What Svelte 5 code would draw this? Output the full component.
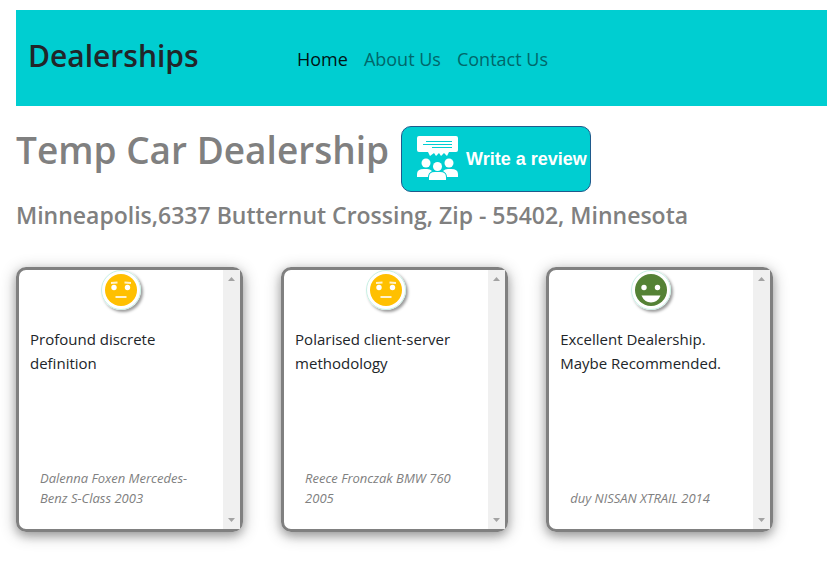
<script>
  const links = [
    { label: 'Home', active: true },
    { label: 'About Us', active: false },
    { label: 'Contact Us', active: false }
  ];

  const reviews = [
    { mood: 'neutral', text: 'Profound discrete definition', by: 'Dalenna Foxen Mercedes-Benz S-Class 2003' },
    { mood: 'neutral', text: 'Polarised client-server methodology', by: 'Reece Fronczak BMW 760 2005' },
    { mood: 'positive', text: 'Excellent Dealership. Maybe Recommended.', by: 'duy NISSAN XTRAIL 2014' }
  ];
</script>

<div class="page">
  <nav>
    <h2>Dealerships</h2>
    <ul>
      {#each links as link}
        <li><a href="#top" class:active={link.active}>{link.label}</a></li>
      {/each}
    </ul>
  </nav>

  <header>
    <h1>Temp Car Dealership</h1>
    <button type="button">
      <svg width="42" height="46" viewBox="0 0 42 46" aria-hidden="true">
        <path fill="#fff" d="M2 0H39Q41 0 41 2V14Q41 16 39 16H32L30 20L27 17L24 20L22 17L19 20L17 17L13 20L11 16H2Q0 16 0 14V2Q0 0 2 0Z" />
        <path stroke="#00ced1" d="M9 5.500H35M6 8.500H35M15 11.500H35" />
        <g fill="#fff">
          <circle cx="9" cy="27" r="4.500" />
          <circle cx="32" cy="27" r="4.500" />
          <circle cx="20.500" cy="30.500" r="4.500" />
          <path d="M0 41V38Q0 33 7 33H10Q13 33 15 35Q11 37 11 41ZM41 41V38Q41 33 34 33H31Q28 33 26 35Q30 37 30 41Z" />
          <path d="M12 44V41Q12 36 18 36H23Q29 36 29 41V44Z" />
        </g>
      </svg>
      <span>Write a review</span>
    </button>
  </header>

  <h4>Minneapolis,6337 Butternut Crossing, Zip - 55402, Minnesota</h4>

  <main>
    {#each reviews as review}
      <article>
        <div class="content">
          <div class="badge">
            <svg width="32" height="32" viewBox="0 0 32 32" role="img" aria-label={review.mood}>
              {#if review.mood === 'positive'}
                <circle cx="16" cy="16" r="16" fill="#548235" />
                <circle cx="9" cy="13.500" r="2.700" fill="#fff" />
                <circle cx="22.500" cy="13.500" r="2.700" fill="#fff" />
                <path fill="#fff" d="M6.500 21.500H25.500Q22.500 28.500 16 28.500Q9.500 28.500 6.500 21.500Z" />
              {:else}
                <circle cx="16" cy="16" r="16" fill="#ffc000" />
                <circle cx="9" cy="13.500" r="2.700" fill="#fff" />
                <circle cx="22.500" cy="13.500" r="2.700" fill="#fff" />
                <path stroke="#fff2cc" stroke-width="2" d="M6 9L12.500 8.600M19.500 8.600L26 9M10.500 23H21.500" />
              {/if}
            </svg>
          </div>
          <p>{review.text}</p>
          <footer>{review.by}</footer>
        </div>
        <div class="scroll" aria-hidden="true">
          <svg width="7" height="4" viewBox="0 0 7 4"><path d="M0 4L3.500 0L7 4Z" /></svg>
          <svg width="7" height="4" viewBox="0 0 7 4"><path d="M0 0L3.500 4L7 0Z" /></svg>
        </div>
      </article>
    {/each}
  </main>
</div>

<style>
  :global(body) {
    margin: 0;
    background: #fff;
  }

  .page {
    padding: 10px 0 0 16px;
    font-family: 'Open Sans', 'Noto Sans', sans-serif;
    font-size: 15px;
    line-height: 24px;
    color: #212529;
  }

  h1, h2, h4, p, ul {
    margin: 0;
  }

  nav {
    display: flex;
    align-items: center;
    height: 96px;
    padding: 0 12px;
    background: #00ced1;
  }

  h2 {
    flex: 0 0 261px;
    padding-bottom: 4px;
    font-size: 30px;
    font-weight: 600;
    line-height: 38px;
  }

  ul {
    display: flex;
    padding: 2px 0 0;
    list-style: none;
  }

  a {
    display: block;
    padding: 8px;
    font-size: 18px;
    font-weight: 400;
    color: #00676a;
    text-decoration: none;
  }

  a.active {
    color: #001415;
  }

  header {
    display: flex;
    align-items: flex-start;
    gap: 12px;
    padding-top: 20px;
  }

  h1 {
    font-size: 37px;
    font-weight: 600;
    line-height: 48px;
    color: gray;
  }

  button {
    display: flex;
    align-items: center;
    gap: 7px;
    height: 66px;
    padding: 0 3px 0 15px;
    border: 1px solid #1f5a8c;
    border-radius: 10px;
    background: #00ced1;
    color: #fff;
    font-family: 'Liberation Sans', sans-serif;
    font-size: 18px;
    font-weight: 700;
    white-space: nowrap;
  }

  h4 {
    padding-top: 10px;
    font-size: 23px;
    font-weight: 600;
    line-height: 26px;
    color: gray;
  }

  main {
    display: grid;
    grid-template-columns: repeat(3, 28%);
    gap: 38px;
    padding: 39px 0 20px;
  }

  article {
    display: flex;
    box-sizing: border-box;
    min-height: 265px;
    border: 3px solid gray;
    border-radius: 10px;
    box-shadow: 0 4px 8px rgba(0, 0, 0, 0.2), 0 3px 16px rgba(0, 0, 0, 0.3);
  }

  .content {
    flex: 1;
    display: flex;
    flex-direction: column;
    min-width: 0;
  }

  .badge {
    display: grid;
    place-items: center;
    align-self: center;
    box-sizing: border-box;
    width: 40px;
    height: 40px;
    border-radius: 50%;
    border: 1px solid #c8f0e4;
    box-shadow: 2px 2px 3px rgba(0, 0, 0, 0.4);
  }

  p {
    padding: 17px 11px;
  }

  footer {
    margin-top: auto;
    padding: 0 21px 21px;
    font-size: 13px;
    font-style: italic;
    line-height: 20px;
    color: gray;
  }

  .scroll {
    flex: 0 0 17px;
    display: flex;
    flex-direction: column;
    justify-content: space-between;
    align-items: center;
    box-sizing: border-box;
    padding: 7px 0;
    background: #f0f0f0;
    fill: #a3a3a3;
  }
</style>
